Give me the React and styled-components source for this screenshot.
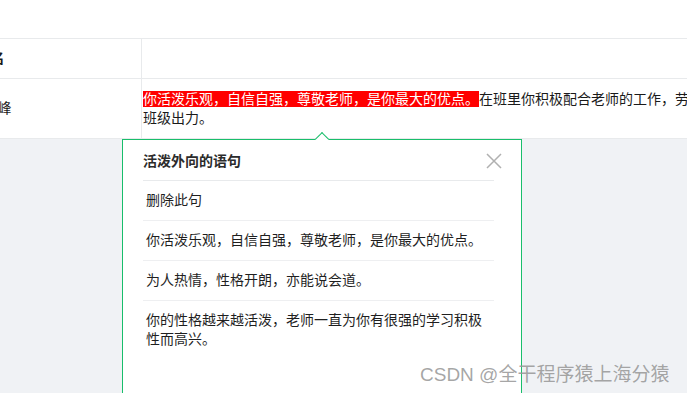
import React from "react";
import styled, { createGlobalStyle } from "styled-components";

const GlobalStyle = createGlobalStyle`
  html, body { margin: 0; padding: 0; overflow: hidden; background: #f0f2f5; }
  body { font-family: "Liberation Sans", "Noto Sans CJK SC", sans-serif; }
`;

const Page = styled.div`
  position: relative;
  width: 687px;
  height: 393px;
  overflow: hidden;
  background: #f0f2f5;
  display: flex;
  flex-direction: column;
`;

const TopSpace = styled.div`
  height: 38px;
  background: #fff;
  flex: none;
`;

const Table = styled.div`
  margin-left: -160px;
  width: 1002px;
  background: #fff;
  border-bottom: 1px solid #e8eaec;
  flex: none;
`;

const Row = styled.div`
  display: grid;
  grid-template-columns: 302px 700px;
  border-top: 1px solid #e8eaec;
  min-height: ${(p) => (p.$head ? "39px" : "59px")};
`;

const NameCell = styled.div`
  box-sizing: border-box;
  border-right: 1px solid #e8eaec;
  display: flex;
  align-items: center;
  justify-content: center;
  font-size: 14px;
  line-height: 19px;
  color: #1a1a1a;
  font-weight: ${(p) => (p.$head ? 700 : 400)};
`;

const TextCell = styled.div`
  box-sizing: border-box;
  padding: 0 18px 0 1px;
  display: flex;
  align-items: center;
  font-size: 14px;
  line-height: 19px;
  color: #1a1a1a;
`;

const Highlight = styled.span`
  color: #fff;
  background-image: linear-gradient(#ff0000, #ff0000);
  background-size: 100% 18px;
  background-position: center;
  background-repeat: no-repeat;
`;

const Popover = styled.div`
  position: absolute;
  left: 122px;
  top: 139px;
  width: 400px;
  height: 300px;
  box-sizing: border-box;
  background: #fff;
  border: 1px solid #19be6b;
  padding: 0 27px 0 20px;
`;

const Arrow = styled.div`
  position: absolute;
  left: 194px;
  top: -6px;
  width: 10px;
  height: 10px;
  box-sizing: border-box;
  background: #fff;
  border-top: 1px solid #19be6b;
  border-left: 1px solid #19be6b;
  transform: rotate(45deg);
`;

const Title = styled.div`
  height: 40px;
  border-bottom: 1px solid #e8eaec;
  display: flex;
  align-items: center;
  font-size: 14px;
  font-weight: 700;
  color: #2b2b2b;
`;

const CloseButton = styled.button`
  position: absolute;
  right: 19px;
  top: 13px;
  width: 16px;
  height: 16px;
  padding: 0;
  border: none;
  background: transparent;
  cursor: pointer;
  display: flex;
`;

const Item = styled.div`
  padding: 10px 3px;
  border-bottom: ${(p) => (p.$last ? "none" : "1px solid #eeeff1")};
  font-size: 14px;
  line-height: 19px;
  color: #1f1f1f;
`;

const Watermark = styled.div`
  position: absolute;
  left: 420px;
  top: 362px;
  font-family: "Liberation Sans", "Noto Sans CJK SC", sans-serif;
  font-size: 19px;
  line-height: 25px;
  color: rgba(150, 150, 150, 0.85);
  white-space: nowrap;
`;

const items = [
  "删除此句",
  "你活泼乐观，自信自强，尊敬老师，是你最大的优点。",
  "为人热情，性格开朗，亦能说会道。",
  "你的性格越来越活泼，老师一直为你有很强的学习积极性而高兴。",
];

export default function App() {
  return (
    <>
      <GlobalStyle />
      <Page>
        <TopSpace />
        <Table>
          <Row $head>
            <NameCell $head>姓名</NameCell>
            <TextCell />
          </Row>
          <Row>
            <NameCell>李小峰</NameCell>
            <TextCell>
              <span>
                <Highlight>你活泼乐观，自信自强，尊敬老师，是你最大的优点。</Highlight>
                在班里你积极配合老师的工作，劳动积极肯干，热心为班级出力。
              </span>
            </TextCell>
          </Row>
        </Table>
        <Popover>
          <Arrow />
          <Title>活泼外向的语句</Title>
          <CloseButton aria-label="关闭">
            <svg width="16" height="16" viewBox="0 0 16 16">
              <path d="M1 1 L15 15 M15 1 L1 15" stroke="#b0b0b0" strokeWidth="1.5" fill="none" />
            </svg>
          </CloseButton>
          {items.map((t, i) => (
            <Item key={i} $last={i === items.length - 1}>
              {t}
            </Item>
          ))}
        </Popover>
        <Watermark>CSDN @全干程序猿上海分猿</Watermark>
      </Page>
    </>
  );
}
